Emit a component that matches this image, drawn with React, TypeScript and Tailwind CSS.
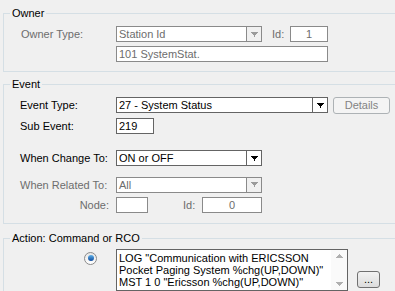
import React from 'react';

// small down-triangle used in the combo buttons
function Arrow({ color }: { color: string }) {
  return (
    <svg width="7" height="5" viewBox="0 0 7 5" shapeRendering="crispEdges">
      <rect x="0" y="0" width="7" height="1" fill={color} />
      <rect x="1" y="1" width="5" height="1" fill={color} />
      <rect x="2" y="2" width="3" height="1" fill={color} />
      <rect x="3" y="3" width="1" height="2" fill={color} />
    </svg>
  );
}

function Combo({ value, width, disabled }: { value: string; width: string; disabled?: boolean }) {
  return (
    <div className={`flex h-[16px] border ${disabled ? 'border-[#8a8a8a]' : 'border-[#646464]'} bg-white ${width}`}>
      <div className={`flex-1 truncate pl-[2px] leading-[14px] ${disabled ? 'text-[#6d6d6d]' : 'text-black'}`}>{value}</div>
      <div className={`flex w-[15px] items-center justify-center border-l ${disabled ? 'border-[#8a8a8a] bg-[#f0f0f0]' : 'border-[#646464] bg-white'}`}>
        <Arrow color={disabled ? '#9a9a9a' : '#000'} />
      </div>
    </div>
  );
}

function Field({ value, width, disabled, center }: { value: string; width: string; disabled?: boolean; center?: boolean }) {
  return (
    <div
      className={`h-[16px] border bg-white px-[2px] leading-[14px] ${width} ${center ? 'text-center' : ''} ${
        disabled ? 'border-[#8a8a8a] text-[#6d6d6d]' : 'border-[#646464] text-black'
      }`}
    >
      {value}
    </div>
  );
}

function Group({ title, className, children }: { title: string; className?: string; children: React.ReactNode }) {
  return (
    <fieldset className={`ml-[3px] border border-r-0 border-[#d5dfe5] ${className ?? ''}`}>
      <legend className="ml-[6px] px-[2px] leading-[13px] text-black">{title}</legend>
      {children}
    </fieldset>
  );
}

export default function App() {
  return (
    <div
      className="h-[291px] w-[395px] overflow-hidden bg-[#f0f0f0] pt-[7px] text-[11px] text-black"
      style={{ fontFamily: '"Liberation Sans", Arial, sans-serif' }}
    >
      <Group title="Owner" className="pb-[9px] pt-[6px]">
        <div className="flex items-center pl-[17px]">
          <span className="w-[95px] text-[#6d6d6d]">Owner Type:</span>
          <Combo value="Station Id" width="w-[146px]" disabled />
          <span className="ml-[10px] w-[18px] text-[#6d6d6d]">Id:</span>
          <Field value="1" width="w-[38px]" disabled center />
        </div>
        <div className="mt-[3px] pl-[112px]">
          <Field value="101 SystemStat." width="w-[212px]" disabled />
        </div>
      </Group>

      <Group title="Event" className="mt-[6px] pb-[9px] pt-[6px]">
        <div className="flex items-center pl-[16px]">
          <span className="w-[96px]">Event Type:</span>
          <Combo value="27 - System Status" width="w-[212px]" />
          <button
            type="button"
            className="ml-[5px] h-[17px] w-[57px] rounded-[3px] border border-[#adb2b5] bg-[#f4f4f4] leading-[15px] text-[#838383]"
          >
            Details
          </button>
        </div>
        <div className="mt-[4px] flex items-center pl-[16px]">
          <span className="w-[96px]">Sub Event:</span>
          <Field value="219" width="w-[38px]" />
        </div>
        <div className="mt-[16px] flex items-center pl-[16px]">
          <span className="w-[96px]">When Change To:</span>
          <Combo value="ON or OFF" width="w-[146px]" />
        </div>
        <div className="mt-[10px] flex items-center pl-[16px]">
          <span className="w-[96px] text-[#6d6d6d]">When Related To:</span>
          <Combo value="All" width="w-[146px]" disabled />
        </div>
        <div className="mt-[4px] flex items-center pl-[16px]">
          <span className="w-[96px] pr-[7px] text-right text-[#6d6d6d]">Node:</span>
          <Field value="" width="w-[32px]" disabled />
          <span className="ml-[35px] w-[19px] text-[#6d6d6d]">Id:</span>
          <Field value="0" width="w-[60px]" disabled center />
        </div>
      </Group>

      <Group title="Action: Command or RCO" className="mt-[8px] pb-[10px] pt-[4px]">
        <div className="flex items-start">
          <div className="w-[112px] pl-[80px] pt-[3px]">
            <span className="flex h-[13px] w-[13px] items-center justify-center rounded-full border border-[#8a8a8a] bg-gradient-to-b from-[#e6e6e6] to-[#ffffff]">
              <span className="h-[6px] w-[6px] rounded-full bg-gradient-to-b from-[#5fb0e8] to-[#0f4a9c]" />
            </span>
          </div>
          <div className="flex h-[42px] w-[232px] border border-[#646464] bg-white">
            <div className="flex-1 overflow-hidden px-[2px] pt-[2px] leading-[12px] whitespace-nowrap">
              <div>LOG "Communication with ERICSSON</div>
              <div>Pocket Paging System %chg(UP,DOWN)"</div>
              <div>MST 1 0 "Ericsson %chg(UP,DOWN)"</div>
            </div>
            <div className="flex w-[16px] flex-col items-center justify-between bg-[#fafafa] py-[4px]">
              <svg width="7" height="4" viewBox="0 0 7 4" shapeRendering="crispEdges">
                <path d="M3 0h1v1h1v1h1v1h1v1H0V3h1V2h1V1h1z" fill="#b0b0b0" />
              </svg>
              <svg width="7" height="4" viewBox="0 0 7 4" shapeRendering="crispEdges">
                <path d="M0 0h7v1H6v1H5v1H4v1H3V3H2V2H1V1H0z" fill="#b0b0b0" />
              </svg>
            </div>
          </div>
          <button
            type="button"
            className="ml-[9px] mt-[22px] h-[17px] w-[23px] rounded-[3px] border border-[#707070] bg-gradient-to-b from-[#f2f2f2] to-[#dcdcdc] leading-[10px]"
          >
            ...
          </button>
        </div>
      </Group>
    </div>
  );
}
